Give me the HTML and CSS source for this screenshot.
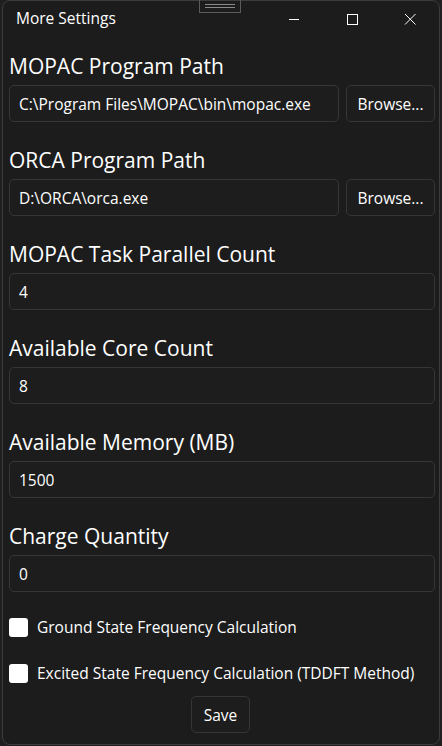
FILE: index.html
```html
<!DOCTYPE html>
<html>
<head>
<meta charset="utf-8">
<link rel="stylesheet" href="styles.css">
</head>
<body>
<div class="window">
  <div class="titlebar">
    <span class="title">More Settings</span>
    <div class="handle"><span></span><span></span></div>
    <div class="controls">
      <span class="ctl"><svg width="12" height="12" viewBox="0 0 12 12"><path d="M1 6.5H11" stroke="#fff" stroke-width="1"/></svg></span>
      <span class="ctl"><svg width="12" height="12" viewBox="0 0 12 12"><rect x="1.5" y="1.5" width="10" height="10" fill="none" stroke="#fff" stroke-width="1"/></svg></span>
      <span class="ctl"><svg width="12" height="12" viewBox="0 0 12 12"><path d="M1 1L11.5 11.5M11.5 1L1 11.5" stroke="#fff" stroke-width="1"/></svg></span>
    </div>
  </div>
  <div class="content">
    <div class="field">
      <div class="label">MOPAC Program Path</div>
      <div class="row">
        <div class="box grow">C:\Program Files\MOPAC\bin\mopac.exe</div>
        <div class="btn browse">Browse...</div>
      </div>
    </div>
    <div class="field">
      <div class="label">ORCA Program Path</div>
      <div class="row">
        <div class="box grow">D:\ORCA\orca.exe</div>
        <div class="btn browse">Browse...</div>
      </div>
    </div>
    <div class="field">
      <div class="label">MOPAC Task Parallel Count</div>
      <div class="box">4</div>
    </div>
    <div class="field">
      <div class="label">Available Core Count</div>
      <div class="box">8</div>
    </div>
    <div class="field">
      <div class="label">Available Memory (MB)</div>
      <div class="box">1500</div>
    </div>
    <div class="field">
      <div class="label">Charge Quantity</div>
      <div class="box">0</div>
    </div>
    <div class="check first"><span class="cb"></span><span>Ground State Frequency Calculation</span></div>
    <div class="check"><span class="cb"></span><span>Excited State Frequency Calculation (TDDFT Method)</span></div>
    <div class="save-row"><div class="btn save">Save</div></div>
  </div>
</div>
</body>
</html>
```
FILE: styles.css
```css
html, body {
  margin: 0;
  padding: 0;
  background: #1f1f1f;
  width: 442px;
  height: 746px;
  overflow: hidden;
}
body {
  font-family: "Open Sans", "Noto Sans", sans-serif;
  color: #ffffff;
}
.window {
  box-sizing: border-box;
  margin: 0 2px;
  height: 745px;
  background: #1c1c1c;
  border: 1px solid #3c3c3c;
  border-radius: 8px;
  position: relative;
}
.titlebar {
  height: 33px;
  display: flex;
  align-items: center;
  position: relative;
}
.title {
  font-size: 15.5px;
  margin-left: 13px;
  margin-top: 1px;
}
.handle {
  position: absolute;
  left: 196px;
  top: -1px;
  width: 42px;
  height: 13px;
  box-sizing: border-box;
  border: 1px solid #5a5a5a;
  border-top: none;
  display: flex;
  flex-direction: column;
  align-items: center;
  justify-content: center;
  gap: 2px;
}
.handle span {
  width: 30px;
  height: 1px;
  background: #8a8a8a;
}
.controls {
  margin-left: auto;
  display: flex;
  height: 100%;
  align-items: center;
}
.ctl {
  width: 58px;
  display: flex;
  justify-content: center;
  padding-top: 2px;
}
.content {
  padding: 18px 4px 0 6px;
  display: flex;
  flex-direction: column;
}
.field {
  display: flex;
  flex-direction: column;
  margin-bottom: 24px;
}
.label {
  font-size: 21px;
  line-height: 28px;
  margin-bottom: 5px;
}
.row {
  display: flex;
  gap: 7px;
}
.box, .btn {
  box-sizing: border-box;
  height: 37px;
  border: 1px solid #363636;
  border-radius: 5px;
  background: #1d1d1d;
  font-size: 15.5px;
  display: flex;
  align-items: center;
}
.box {
  padding-left: 9px;
}
.grow { flex: 1; }
.btn {
  justify-content: center;
}
.browse { width: 89px; }
.check {
  display: flex;
  align-items: center;
  gap: 9px;
  font-size: 15.5px;
  height: 20px;
  margin-bottom: 12px;
}
.check.first { margin-top: 1px; margin-bottom: 26px; }
.cb {
  width: 19px;
  height: 19px;
  background: #ffffff;
  border-radius: 3px;
}
.save-row {
  display: flex;
  justify-content: center;
  margin-right: 3px;
  margin-top: 1px;
}
.save { width: 59px; }
```
